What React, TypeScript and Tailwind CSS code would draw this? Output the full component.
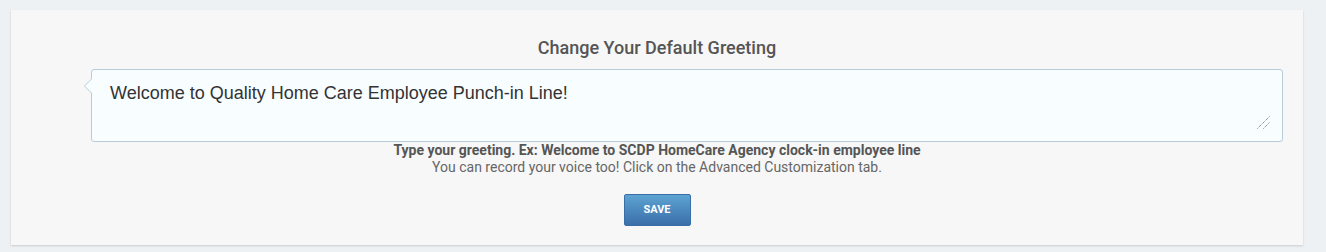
export default function App() {
	return (
		<div className="min-h-[252px] w-full bg-[#eef1f4] pt-[10px] pl-[11px] pr-[23px] pb-[6px] font-['Roboto',sans-serif]">
			<div className="flex flex-col items-center bg-[#f7f7f7] pt-[28px] pb-[19px] shadow-[0_1px_2px_rgba(0,0,0,0.15)]">
				<h2 className="text-[18px] leading-[20px] font-medium text-[#555]">
					Change Your Default Greeting
				</h2>
				<div className="relative mt-[11px] self-stretch ml-[80px] mr-[20px]">
					<span className="absolute left-[-7px] top-[10px] h-0 w-0 border-y-[7px] border-r-[7px] border-y-transparent border-r-[#b8ccd8]" />
					<span className="absolute left-[-6px] top-[10px] h-0 w-0 border-y-[7px] border-r-[7px] border-y-transparent border-r-[#f8fdff]" />
					<textarea
						defaultValue="Welcome to Quality Home Care Employee Punch-in Line!"
						className="block h-[73px] w-full resize-none rounded-[3px] border border-[#b8ccd8] bg-[#f8fdff] px-[18px] py-[11px] font-['Liberation_Sans',Arial,sans-serif] text-[18px] leading-[24px] text-[#333] outline-none"
					/>
					<svg
						className="pointer-events-none absolute right-[13px] bottom-[13px]"
						width="13"
						height="13"
						viewBox="0 0 13 13"
						aria-hidden="true"
					>
						<path
							d="M0.5 12.5 L12.5 0.5 M6.5 12.5 L12.5 6.5"
							stroke="#666"
							strokeWidth="1"
							strokeDasharray="1 1"
						/>
					</svg>
				</div>
				<p className="text-[14px] leading-[17px] font-bold text-[#555]">
					Type your greeting. Ex: Welcome to SCDP HomeCare Agency clock-in employee line
				</p>
				<p className="text-[14px] leading-[17px] text-[#666]">
					You can record your voice too! Click on the Advanced Customization tab.
				</p>
				<button
					type="button"
					className="mt-[18px] h-[32px] w-[67px] rounded-[2px] border border-[#3a6ea6] bg-gradient-to-b from-[#5da3d2] to-[#3b6fa9] text-[11px] font-bold text-white"
				>
					SAVE
				</button>
			</div>
		</div>
	);
}
